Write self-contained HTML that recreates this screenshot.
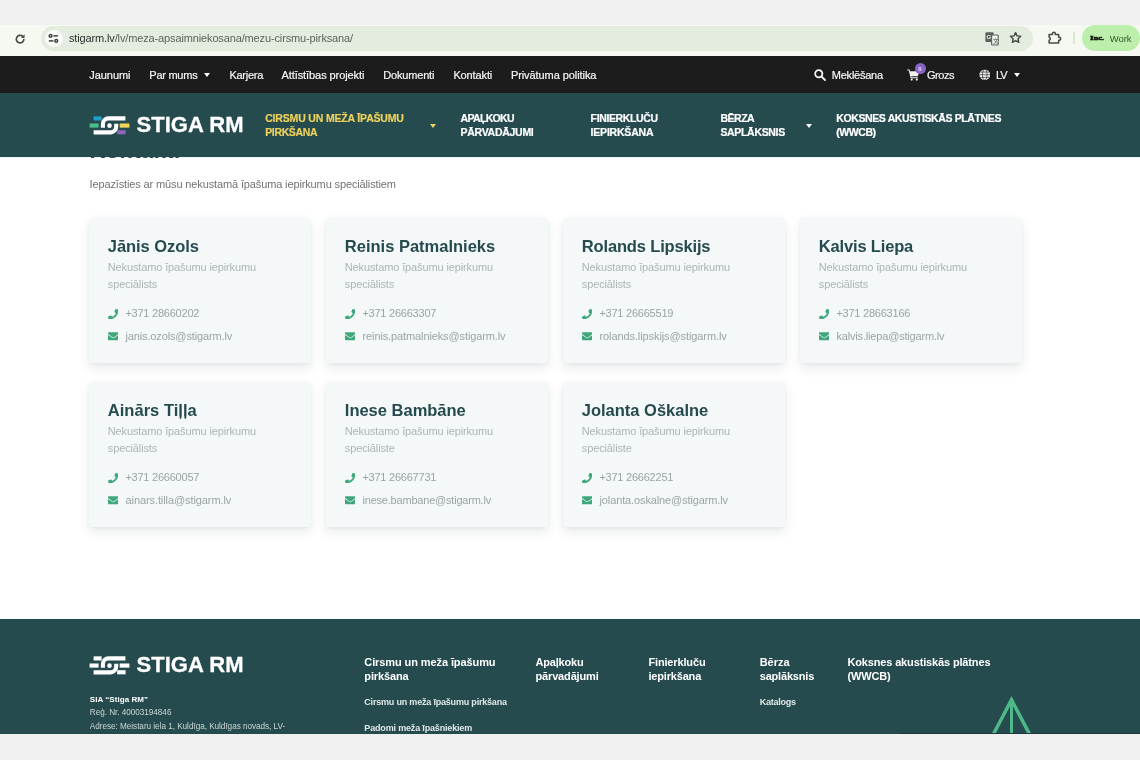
<!DOCTYPE html>
<html lang="lv">
<head>
<meta charset="utf-8">
<title>Stiga RM</title>
<style>
*{box-sizing:border-box;margin:0;padding:0}
html,body{width:1140px;height:760px;overflow:hidden;background:#fff}
body{position:relative;font-family:"Liberation Sans",sans-serif;-webkit-font-smoothing:antialiased;will-change:transform;background:transparent}
.abs{position:absolute}
.t{position:absolute;white-space:nowrap;line-height:1}
/* browser chrome */
#chrome-top{left:0;top:0;width:1140px;height:25px;background:#f0f0f0}
#toolbar{left:0;top:25px;width:1140px;height:31px;background:#f5f9f2}
#urlpill{left:40.500px;top:26px;width:992.500px;height:24.500px;border-radius:12.500px;background:#e3ecdf}
#sitecircle{left:45px;top:29.500px;width:17.500px;height:17.500px;border-radius:9px;background:#f8fbf6}
#url{left:69px;top:32.500px;font-size:11px;color:#5d635c}
#url b{font-weight:normal;color:#2b2f2b}
#work{left:1082px;top:25px;width:57.500px;height:26px;border-radius:13px;background:#bbefab}
/* top nav */
#nav{left:0;top:56px;width:1140px;height:37px;background:#1c1c1c}
.n{color:#f5f5f5;font-size:11px;top:70px;letter-spacing:-0.15px;-webkit-text-stroke:0.200px #f5f5f5}
/* header */
#head{left:0;top:93px;width:1140px;height:64px;background:#264b4e;box-shadow:0 0 1px rgba(0,0,0,.3)}
.m{color:#fff;font-weight:bold;font-size:10.5px;line-height:14px;top:111.300px;white-space:nowrap;position:absolute;-webkit-text-stroke:0.200px currentColor}
.m.y{color:#ecd05c}
.caret{position:absolute;width:0;height:0;border-left:3.800px solid transparent;border-right:3.800px solid transparent;border-top:4.300px solid #fff}
/* content */
#intro{left:89.500px;top:179.400px;font-size:11px;color:#727272;letter-spacing:-0.13px}
.card{position:absolute;width:222px;height:145px;background:#f4f8f9;border-radius:3px;box-shadow:0 5px 12px rgba(30,50,60,.10),0 1px 4px rgba(30,50,60,.05)}
.card .nm{position:absolute;left:18.800px;top:20px;font-size:16.5px;font-weight:bold;color:#264b4e;white-space:nowrap;line-height:1}
.card .rl{position:absolute;left:18.800px;top:41.400px;font-size:11px;line-height:17px;color:#acb4b4;white-space:nowrap;letter-spacing:-0.13px}
.card .ph{position:absolute;left:36.400px;top:89.900px;font-size:11px;color:#9aa3a3;white-space:nowrap;line-height:1;letter-spacing:-0.23px}
.card .em{position:absolute;left:36.500px;top:113.200px;font-size:11px;color:#9aa3a3;white-space:nowrap;line-height:1;letter-spacing:-0.12px}
.card svg.i1{position:absolute;left:18.500px;top:90.600px;width:10.500px;height:10.500px}
.card svg.i2{position:absolute;left:18.500px;top:113.400px;width:10.500px;height:10.500px}
/* footer */
#foot{left:0;top:619px;width:1140px;height:115px;background:#264b4e}
#bottom{left:0;top:734px;width:1140px;height:26px;background:#f0f0f0}
.fh{position:absolute;color:#fff;font-weight:bold;font-size:11px;line-height:14px;white-space:nowrap;top:655.300px}
.fl{position:absolute;color:#dfe8e6;font-weight:bold;font-size:9px;white-space:nowrap;line-height:1}
.fs{position:absolute;color:#c9d6d4;font-size:8.200px;white-space:nowrap;line-height:1}
</style>
</head>
<body>
<!-- BROWSER CHROME -->
<div id="chrome-top" class="abs"></div>
<div id="toolbar" class="abs"></div>
<div id="urlpill" class="abs"></div>
<div id="sitecircle" class="abs"></div>
<svg class="abs" style="left:14.300px;top:32.700px" width="12.200" height="12.200" viewBox="0 0 24 24" fill="none" stroke="#454845" stroke-width="3.200"><path d="M19.500 12a7.500 7.500 0 1 1-2.400-5.500"/><path d="M20.800 2.500v7.200h-7.200z" fill="#454845" stroke="none"/></svg>
<svg class="abs" style="left:48.400px;top:33px" width="10.800" height="10.800" viewBox="0 0 12 12" fill="none" stroke="#404340" stroke-width="1.700"><circle cx="2.8" cy="3.2" r="1.5"/><path d="M6 3.2h5"/><circle cx="9.2" cy="8.8" r="1.5"/><path d="M1 8.8h5"/></svg>
<div id="url" class="t" style="letter-spacing:-0.136px"><b>stigarm.lv</b>/lv/meza-apsaimniekosana/mezu-cirsmu-pirksana/</div>
<!-- translate icon -->
<svg class="abs" style="left:984.500px;top:31.500px" width="14" height="14" viewBox="0 0 14 14"><rect x="0.400" y="0.300" width="8.200" height="9.600" rx="1" fill="#5c615c"/><rect x="6.600" y="3" width="6.600" height="10" rx="0.800" fill="#eef3eb" stroke="#5c615c" stroke-width="1.100"/><text x="1.600" y="7.300" font-size="6.200" font-family="Liberation Sans, sans-serif" fill="#e8eee5" font-weight="bold">G</text><text x="8" y="10.800" font-size="5.500" font-family="Liberation Sans, Noto Sans CJK SC, sans-serif" fill="#4a4f4a">文</text></svg>
<!-- star -->
<svg class="abs" style="left:1009.300px;top:31.400px" width="13.200" height="13.200" viewBox="0 0 24 24" fill="none" stroke="#454845" stroke-width="2.600" stroke-linejoin="round"><path d="M12 2.800l2.800 6 6.500.8-4.800 4.500 1.300 6.500L12 17.300 6.200 20.600l1.300-6.500L2.700 9.600l6.500-.8z"/></svg>
<!-- extension -->
<svg class="abs" style="left:1047px;top:30.400px" width="14.500" height="14.500" viewBox="0 0 24 24" fill="none" stroke="#454845" stroke-width="2.500" stroke-linejoin="round"><path d="M3.500 7.500H9V6.300a2.400 2.400 0 0 1 4.800 0V7.500H19.300V12h1a2.400 2.400 0 0 1 0 4.800h-1V21.500H3.500V16.800a2.500 2.500 0 0 0 0-4.900z"/></svg>
<div class="abs" style="left:1073px;top:32px;width:2px;height:12px;background:#d4ebcb;border-radius:1px"></div>
<div id="work" class="abs"></div>
<div class="t" style="left:1090.300px;top:35.300px;font-size:6.800px;font-weight:bold;color:#0a1208;font-family:'Liberation Serif',serif;-webkit-text-stroke:0.500px #0a1208;transform:scaleX(1.280);transform-origin:0 0">Inc.</div>
<div class="t" style="left:1109.800px;top:33.700px;font-size:9.500px;color:#2f5a2a;letter-spacing:-0.100px">Work</div>

<!-- TOP NAV -->
<div id="nav" class="abs"></div>
<div class="t n" id="nv1" style="letter-spacing:-0.068px;left:89.3px">Jaunumi</div>
<div class="t n" id="nv2" style="letter-spacing:-0.253px;left:149.3px">Par mums</div>
<div class="caret" style="left:204px;top:73px"></div>
<div class="t n" id="nv3" style="letter-spacing:-0.267px;left:229.4px">Karjera</div>
<div class="t n" id="nv4" style="letter-spacing:-0.078px;left:281.5px">Attīstības projekti</div>
<div class="t n" id="nv5" style="letter-spacing:-0.186px;left:383.3px">Dokumenti</div>
<div class="t n" id="nv6" style="letter-spacing:-0.119px;left:453.4px">Kontakti</div>
<div class="t n" id="nv7" style="letter-spacing:-0.074px;left:510.9px">Privātuma politika</div>
<svg class="abs" style="left:814.300px;top:69.300px" width="12" height="12" viewBox="0 0 12 12" fill="none" stroke="#f5f5f5" stroke-width="1.800"><circle cx="4.800" cy="4.800" r="3.600"/><path d="M7.500 7.500l3.500 3.500" stroke-linecap="round"/></svg>
<div class="t n" id="nv8" style="letter-spacing:-0.234px;left:831.8px">Meklēšana</div>
<svg class="abs" style="left:907px;top:69.300px" width="13" height="12" viewBox="0 0 13 12" fill="#f2f2f2"><path d="M0.300 0.600h2.200l0.500 1.700h9.200l-1.300 4.900H4.200l0.300 1.100h6.300v1H3.700L1.800 1.600H0.300z"/><circle cx="4.700" cy="10.600" r="1.100"/><circle cx="9.800" cy="10.600" r="1.100"/></svg>
<div class="abs" style="left:914.500px;top:63.300px;width:11px;height:11px;border-radius:6px;background:#8a63c6"></div>
<div class="t" style="left:918.200px;top:65.800px;font-size:6px;font-weight:bold;color:#e6dcf5">0</div>
<div class="t n" id="nv9" style="letter-spacing:-0.469px;left:927px">Grozs</div>
<svg class="abs" style="left:978.700px;top:69.300px" width="11.500" height="11.500" viewBox="0 0 12 12" fill="none" stroke="#1c1c1c" stroke-width="0.650"><circle cx="6" cy="6" r="5.600" fill="#f2f2f2" stroke="none"/><ellipse cx="6" cy="6" rx="2.400" ry="5.600"/><path d="M0.400 6h11.200M1.200 3.200h9.600M1.200 8.800h9.600"/></svg>
<div class="t n" id="nv10" style="letter-spacing:-0.97px;left:996px">LV</div>
<div class="caret" style="left:1014px;top:73px"></div>

<!-- HEADER -->
<div class="abs" style="left:89.500px;top:139.800px;width:120px;height:24px;overflow:hidden"><div class="t" id="h1" style="letter-spacing:0.375px;left:0;top:0;font-size:22px;font-weight:bold;color:#264b4e">Kontakti</div></div>
<div id="head" class="abs"></div>
<!-- logo -->
<svg class="abs" style="left:89px;top:115.200px" width="42" height="20.700" viewBox="0 0 42 20" preserveAspectRatio="none">
<rect x="4.600" y="1.300" width="8" height="4" fill="#1f9fd0"/>
<rect x="0.600" y="8.200" width="9" height="4" fill="#4dbb8a"/>
<rect x="30.700" y="8.200" width="9.700" height="4" fill="#f3d45a"/>
<rect x="28.200" y="14.700" width="8.400" height="4" fill="#8b68b8"/>
<path d="M36.400 3.200H19.500a5.600 5.600 0 0 0-5.600 5.600v3.500" fill="none" stroke="#fff" stroke-width="4.100"/>
<path d="M4.600 16.700H21.600a5.600 5.600 0 0 0 5.600-5.600v-2.600" fill="none" stroke="#fff" stroke-width="4.100"/>
<circle cx="20.500" cy="10.300" r="2.300" fill="#fff"/>
</svg>
<div class="t" id="logotext" style="left:136.500px;top:114.300px;font-size:22px;font-weight:bold;color:#fff;letter-spacing:0.050px;-webkit-text-stroke:0.300px #fff">STIGA RM</div>
<div class="m y" style="left:265.200px"><span id="m1a" style="letter-spacing:-0.17px">CIRSMU UN MEŽA ĪPAŠUMU</span><br><span id="m1b" style="letter-spacing:-0.355px">PIRKŠANA</span></div>
<div class="caret" style="left:430.200px;top:123.500px;border-top-color:#ecd05c"></div>
<div class="m" style="left:460.5px"><span id="m2a" style="letter-spacing:-0.667px">APAĻKOKU</span><br><span id="m2b" style="letter-spacing:-0.277px">PĀRVADĀJUMI</span></div>
<div class="m" style="left:590.6px"><span id="m3a" style="letter-spacing:-0.37px">FINIERKLUČU</span><br><span id="m3b" style="letter-spacing:-0.207px">IEPIRKŠANA</span></div>
<div class="m" style="left:720.4px"><span id="m4a" style="letter-spacing:-0.474px">BĒRZA</span><br><span id="m4b" style="letter-spacing:-0.319px">SAPLĀKSNIS</span></div>
<div class="caret" style="left:806px;top:123.500px"></div>
<div class="m" style="left:836.2px"><span id="m5a" style="letter-spacing:-0.375px">KOKSNES AKUSTISKĀS PLĀTNES</span><br><span id="m5b" style="letter-spacing:-0.414px">(WWCB)</span></div>

<!-- CONTENT -->
<div id="intro" class="t">Iepazīsties ar mūsu nekustamā īpašuma iepirkumu speciālistiem</div>

<!-- cards inserted below -->
<div class="card" style="left:89px;top:218px"><div class="nm" id="n1" style="letter-spacing:-0.055px">Jānis Ozols</div><div class="rl">Nekustamo īpašumu iepirkumu<br>speciālists</div><svg class="i1" viewBox="0 0 512 512"><path fill="#3fa77b" d="M493.4 24.600l-104-24c-11.300-2.600-22.900 3.300-27.500 13.900l-48 112c-4.200 9.800-1.400 21.300 6.900 28l60.600 49.600c-36 76.700-98.900 140.500-177.200 177.200l-49.600-60.600c-6.800-8.300-18.200-11.100-28-6.900l-112 48C3.900 366.500-2 378.100.6 389.400l24 104C27.100 504.200 36.700 512 48 512c256.100 0 464-207.500 464-464 0-11.200-7.700-20.900-18.600-23.400z"/></svg><div class="ph">+371 28660202</div><svg class="i2" viewBox="0 0 512 512"><path fill="#3fa77b" d="M502.300 190.800c3.900-3.100 9.700-.2 9.700 4.700V400c0 26.500-21.500 48-48 48H48c-26.500 0-48-21.500-48-48V195.600c0-5 5.700-7.800 9.700-4.700 22.400 17.400 52.100 39.500 154.100 113.600 21.100 15.400 56.700 47.800 92.200 47.600 35.700.3 72-32.800 92.300-47.600 102-74.100 131.600-96.300 154-113.700zM256 320c23.200.4 56.600-29.200 73.400-41.400 132.700-96.300 142.800-104.700 173.400-128.700 5.800-4.500 9.200-11.500 9.200-18.900v-19c0-26.500-21.500-48-48-48H48C21.500 64 0 85.500 0 112v19c0 7.400 3.400 14.300 9.200 18.900 30.600 23.900 40.700 32.400 173.400 128.700 16.800 12.200 50.200 41.800 73.400 41.400z"/></svg><div class="em" id="e1" style="letter-spacing:-0.136px">janis.ozols@stigarm.lv</div></div>
<div class="card" style="left:326px;top:218px"><div class="nm" id="n2" style="letter-spacing:-0.0px">Reinis Patmalnieks</div><div class="rl">Nekustamo īpašumu iepirkumu<br>speciālists</div><svg class="i1" viewBox="0 0 512 512"><path fill="#3fa77b" d="M493.4 24.600l-104-24c-11.300-2.600-22.900 3.300-27.500 13.900l-48 112c-4.200 9.800-1.400 21.300 6.900 28l60.600 49.600c-36 76.700-98.900 140.500-177.200 177.200l-49.600-60.600c-6.800-8.300-18.200-11.100-28-6.900l-112 48C3.900 366.500-2 378.100.6 389.400l24 104C27.100 504.200 36.700 512 48 512c256.100 0 464-207.500 464-464 0-11.200-7.700-20.900-18.600-23.400z"/></svg><div class="ph">+371 26663307</div><svg class="i2" viewBox="0 0 512 512"><path fill="#3fa77b" d="M502.300 190.800c3.900-3.100 9.700-.2 9.700 4.700V400c0 26.500-21.500 48-48 48H48c-26.500 0-48-21.500-48-48V195.600c0-5 5.700-7.800 9.700-4.700 22.400 17.400 52.100 39.500 154.100 113.600 21.100 15.400 56.700 47.800 92.200 47.600 35.700.3 72-32.800 92.300-47.600 102-74.100 131.600-96.300 154-113.700zM256 320c23.200.4 56.600-29.200 73.400-41.400 132.700-96.300 142.800-104.700 173.400-128.700 5.800-4.500 9.200-11.500 9.200-18.900v-19c0-26.500-21.500-48-48-48H48C21.500 64 0 85.500 0 112v19c0 7.400 3.400 14.300 9.200 18.900 30.600 23.900 40.700 32.400 173.400 128.700 16.800 12.200 50.200 41.800 73.400 41.400z"/></svg><div class="em" id="e2" style="letter-spacing:-0.113px">reinis.patmalnieks@stigarm.lv</div></div>
<div class="card" style="left:563px;top:218px"><div class="nm" id="n3" style="letter-spacing:-0.158px">Rolands Lipskijs</div><div class="rl">Nekustamo īpašumu iepirkumu<br>speciālists</div><svg class="i1" viewBox="0 0 512 512"><path fill="#3fa77b" d="M493.4 24.600l-104-24c-11.300-2.600-22.900 3.300-27.500 13.900l-48 112c-4.200 9.800-1.400 21.300 6.900 28l60.600 49.600c-36 76.700-98.900 140.500-177.200 177.200l-49.600-60.600c-6.800-8.300-18.200-11.100-28-6.900l-112 48C3.900 366.500-2 378.100.6 389.400l24 104C27.100 504.200 36.700 512 48 512c256.100 0 464-207.500 464-464 0-11.200-7.700-20.900-18.600-23.400z"/></svg><div class="ph">+371 26665519</div><svg class="i2" viewBox="0 0 512 512"><path fill="#3fa77b" d="M502.300 190.800c3.900-3.100 9.700-.2 9.700 4.700V400c0 26.500-21.500 48-48 48H48c-26.500 0-48-21.500-48-48V195.600c0-5 5.700-7.800 9.700-4.700 22.400 17.400 52.100 39.500 154.100 113.600 21.100 15.400 56.700 47.800 92.200 47.600 35.700.3 72-32.800 92.300-47.600 102-74.100 131.600-96.300 154-113.700zM256 320c23.200.4 56.600-29.200 73.400-41.400 132.700-96.300 142.800-104.700 173.400-128.700 5.800-4.500 9.200-11.500 9.200-18.900v-19c0-26.500-21.500-48-48-48H48C21.500 64 0 85.500 0 112v19c0 7.400 3.400 14.300 9.200 18.900 30.600 23.900 40.700 32.400 173.400 128.700 16.800 12.200 50.200 41.800 73.400 41.400z"/></svg><div class="em" id="e3" style="letter-spacing:-0.095px">rolands.lipskijs@stigarm.lv</div></div>
<div class="card" style="left:800px;top:218px"><div class="nm" id="n4" style="letter-spacing:-0.166px">Kalvis Liepa</div><div class="rl">Nekustamo īpašumu iepirkumu<br>speciālists</div><svg class="i1" viewBox="0 0 512 512"><path fill="#3fa77b" d="M493.4 24.600l-104-24c-11.300-2.600-22.900 3.300-27.500 13.900l-48 112c-4.200 9.800-1.400 21.300 6.900 28l60.600 49.600c-36 76.700-98.900 140.500-177.200 177.200l-49.600-60.600c-6.800-8.300-18.200-11.100-28-6.900l-112 48C3.900 366.500-2 378.100.6 389.400l24 104C27.100 504.200 36.700 512 48 512c256.100 0 464-207.500 464-464 0-11.200-7.700-20.900-18.600-23.400z"/></svg><div class="ph">+371 28663166</div><svg class="i2" viewBox="0 0 512 512"><path fill="#3fa77b" d="M502.300 190.800c3.900-3.100 9.700-.2 9.700 4.700V400c0 26.500-21.500 48-48 48H48c-26.500 0-48-21.500-48-48V195.600c0-5 5.700-7.800 9.700-4.700 22.400 17.400 52.100 39.500 154.100 113.600 21.100 15.400 56.700 47.800 92.200 47.600 35.700.3 72-32.800 92.300-47.600 102-74.100 131.600-96.300 154-113.700zM256 320c23.200.4 56.600-29.200 73.400-41.400 132.700-96.300 142.800-104.700 173.400-128.700 5.800-4.500 9.200-11.500 9.200-18.900v-19c0-26.500-21.500-48-48-48H48C21.500 64 0 85.500 0 112v19c0 7.400 3.400 14.300 9.200 18.900 30.600 23.900 40.700 32.400 173.400 128.700 16.800 12.200 50.200 41.800 73.400 41.400z"/></svg><div class="em" id="e4" style="letter-spacing:-0.18px">kalvis.liepa@stigarm.lv</div></div>
<div class="card" style="left:89px;top:382px"><div class="nm" id="n5" style="letter-spacing:0.029px">Ainārs Tiļļa</div><div class="rl">Nekustamo īpašumu iepirkumu<br>speciālists</div><svg class="i1" viewBox="0 0 512 512"><path fill="#3fa77b" d="M493.4 24.600l-104-24c-11.300-2.600-22.900 3.300-27.500 13.900l-48 112c-4.200 9.800-1.400 21.300 6.900 28l60.600 49.600c-36 76.700-98.900 140.500-177.200 177.200l-49.600-60.600c-6.800-8.300-18.200-11.100-28-6.900l-112 48C3.900 366.500-2 378.100.6 389.400l24 104C27.100 504.200 36.700 512 48 512c256.100 0 464-207.500 464-464 0-11.200-7.700-20.900-18.600-23.400z"/></svg><div class="ph">+371 26660057</div><svg class="i2" viewBox="0 0 512 512"><path fill="#3fa77b" d="M502.300 190.800c3.900-3.100 9.700-.2 9.700 4.700V400c0 26.500-21.500 48-48 48H48c-26.500 0-48-21.500-48-48V195.600c0-5 5.700-7.800 9.700-4.700 22.400 17.400 52.100 39.500 154.100 113.600 21.100 15.400 56.700 47.800 92.200 47.600 35.700.3 72-32.800 92.300-47.600 102-74.100 131.600-96.300 154-113.700zM256 320c23.200.4 56.600-29.200 73.400-41.400 132.700-96.300 142.800-104.700 173.400-128.700 5.800-4.500 9.200-11.500 9.200-18.900v-19c0-26.500-21.500-48-48-48H48C21.500 64 0 85.500 0 112v19c0 7.400 3.400 14.300 9.200 18.900 30.600 23.900 40.700 32.400 173.400 128.700 16.800 12.200 50.200 41.800 73.400 41.400z"/></svg><div class="em" id="e5" style="letter-spacing:-0.089px">ainars.tilla@stigarm.lv</div></div>
<div class="card" style="left:326px;top:382px"><div class="nm" id="n6" style="letter-spacing:-0.005px">Inese Bambāne</div><div class="rl">Nekustamo īpašumu iepirkumu<br>speciāliste</div><svg class="i1" viewBox="0 0 512 512"><path fill="#3fa77b" d="M493.4 24.600l-104-24c-11.300-2.600-22.900 3.300-27.500 13.900l-48 112c-4.200 9.800-1.400 21.300 6.900 28l60.600 49.600c-36 76.700-98.900 140.500-177.200 177.200l-49.600-60.600c-6.800-8.300-18.200-11.100-28-6.900l-112 48C3.900 366.500-2 378.100.6 389.400l24 104C27.100 504.200 36.700 512 48 512c256.100 0 464-207.500 464-464 0-11.200-7.700-20.900-18.600-23.400z"/></svg><div class="ph">+371 26667731</div><svg class="i2" viewBox="0 0 512 512"><path fill="#3fa77b" d="M502.300 190.800c3.900-3.100 9.700-.2 9.700 4.700V400c0 26.500-21.500 48-48 48H48c-26.500 0-48-21.500-48-48V195.600c0-5 5.700-7.800 9.700-4.700 22.400 17.400 52.100 39.500 154.100 113.600 21.100 15.400 56.700 47.800 92.200 47.600 35.700.3 72-32.800 92.300-47.600 102-74.100 131.600-96.300 154-113.700zM256 320c23.200.4 56.600-29.200 73.400-41.400 132.700-96.300 142.800-104.700 173.400-128.700 5.800-4.500 9.200-11.500 9.200-18.900v-19c0-26.500-21.500-48-48-48H48C21.500 64 0 85.500 0 112v19c0 7.400 3.400 14.300 9.200 18.900 30.600 23.900 40.700 32.400 173.400 128.700 16.800 12.200 50.200 41.800 73.400 41.400z"/></svg><div class="em" id="e6" style="letter-spacing:-0.206px">inese.bambane@stigarm.lv</div></div>
<div class="card" style="left:563px;top:382px"><div class="nm" id="n7" style="letter-spacing:-0.011px">Jolanta Oškalne</div><div class="rl">Nekustamo īpašumu iepirkumu<br>speciāliste</div><svg class="i1" viewBox="0 0 512 512"><path fill="#3fa77b" d="M493.4 24.600l-104-24c-11.300-2.600-22.900 3.300-27.500 13.900l-48 112c-4.200 9.800-1.400 21.300 6.900 28l60.600 49.600c-36 76.700-98.900 140.500-177.200 177.200l-49.600-60.600c-6.800-8.300-18.200-11.100-28-6.900l-112 48C3.900 366.500-2 378.100.6 389.400l24 104C27.100 504.200 36.700 512 48 512c256.100 0 464-207.500 464-464 0-11.200-7.700-20.900-18.600-23.400z"/></svg><div class="ph">+371 26662251</div><svg class="i2" viewBox="0 0 512 512"><path fill="#3fa77b" d="M502.300 190.800c3.900-3.100 9.700-.2 9.700 4.700V400c0 26.500-21.500 48-48 48H48c-26.500 0-48-21.500-48-48V195.600c0-5 5.700-7.800 9.700-4.700 22.400 17.400 52.100 39.500 154.100 113.600 21.100 15.400 56.700 47.800 92.200 47.600 35.700.3 72-32.800 92.300-47.600 102-74.100 131.600-96.300 154-113.700zM256 320c23.200.4 56.600-29.200 73.400-41.400 132.700-96.300 142.800-104.700 173.400-128.700 5.800-4.500 9.200-11.500 9.200-18.900v-19c0-26.500-21.500-48-48-48H48C21.500 64 0 85.500 0 112v19c0 7.400 3.400 14.300 9.200 18.900 30.600 23.900 40.700 32.400 173.400 128.700 16.800 12.200 50.200 41.800 73.400 41.400z"/></svg><div class="em" id="e7" style="letter-spacing:-0.12px">jolanta.oskalne@stigarm.lv</div></div>

<!-- FOOTER -->
<div id="foot" class="abs"></div>

<svg class="abs" style="left:89px;top:655.200px" width="42" height="20.700" viewBox="0 0 42 20" preserveAspectRatio="none">
<rect x="4.600" y="1.300" width="8" height="4" fill="#fff"/>
<rect x="0.600" y="8.200" width="9" height="4" fill="#fff"/>
<rect x="30.700" y="8.200" width="9.700" height="4" fill="#fff"/>
<rect x="28.200" y="14.700" width="8.400" height="4" fill="#fff"/>
<path d="M36.400 3.200H19.500a5.600 5.600 0 0 0-5.600 5.600v3.500" fill="none" stroke="#fff" stroke-width="4.100"/>
<path d="M4.600 16.700H21.600a5.600 5.600 0 0 0 5.600-5.600v-2.600" fill="none" stroke="#fff" stroke-width="4.100"/>
<circle cx="20.500" cy="10.300" r="2.300" fill="#fff"/>
</svg>
<div class="t" id="flogotext" style="left:136.500px;top:654.300px;font-size:22px;font-weight:bold;color:#fff;letter-spacing:0.050px;-webkit-text-stroke:0.300px #fff">STIGA RM</div>
<div class="fs" id="f1" style="letter-spacing:0.051px;left:89.800px;top:696px;font-weight:bold;color:#fff;font-size:8px">SIA “Stiga RM”</div>
<div class="fs" id="f2" style="letter-spacing:-0.04px;left:89.800px;top:709.400px">Reģ. Nr. 40003194846</div>
<div class="fs" id="f3" style="letter-spacing:-0.037px;left:89.800px;top:722.500px">Adrese: Meistaru iela 1, Kuldīga, Kuldīgas novads, LV-</div>
<div class="fh" style="left:364.300px"><span id="g1a" style="letter-spacing:-0.094px">Cirsmu un meža īpašumu</span><br><span id="g1b" style="letter-spacing:-0.131px">pirkšana</span></div>
<div class="fl" id="g1c" style="letter-spacing:-0.195px;left:364.300px;top:697.500px">Cirsmu un meža īpašumu pirkšana</div>
<div class="abs" style="left:364px;top:716px;width:200px;height:18px;overflow:hidden"><div class="fl" id="g1d" style="letter-spacing:-0.167px;left:0.300px;top:7.700px">Padomi meža īpašniekiem</div></div>
<div class="fh" style="left:535.500px"><span id="g2a" style="letter-spacing:-0.202px">Apaļkoku</span><br><span id="g2b" style="letter-spacing:-0.156px">pārvadājumi</span></div>
<div class="fh" style="left:648.400px"><span id="g3a" style="letter-spacing:-0.144px">Finierkluču</span><br><span id="g3b" style="letter-spacing:-0.172px">iepirkšana</span></div>
<div class="fh" style="left:759.700px"><span id="g4a" style="letter-spacing:-0.034px">Bērza</span><br><span id="g4b" style="letter-spacing:-0.177px">saplāksnis</span></div>
<div class="fl" id="g4c" style="letter-spacing:-0.239px;left:759.700px;top:697.500px">Katalogs</div>
<div class="fh" style="left:847.400px"><span id="g5a" style="letter-spacing:-0.144px">Koksnes akustiskās plātnes</span><br><span id="g5b" style="letter-spacing:-0.147px">(WWCB)</span></div>
<svg class="abs" style="left:985px;top:690px" width="54" height="44" viewBox="0 0 54 44" fill="none" stroke="#4db888"><path d="M7.500 46L26.500 9.800L45.500 46" stroke-width="3.500"/><path d="M26.500 12V46" stroke-width="3"/></svg>

<div class="abs" style="left:900px;top:733px;width:240px;height:1px;background:#1e393b"></div>
<div id="bottom" class="abs"></div>
</body>
</html>
